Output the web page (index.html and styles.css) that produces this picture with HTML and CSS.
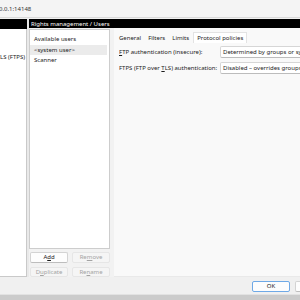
FILE: index.html
```html
<!DOCTYPE html>
<html lang="en">
<head>
    <meta charset="UTF-8">
    <title>Rights management / Users</title>

    <link rel="stylesheet" href="styles.css">
</head>
<body>
<div class="window">
    <div class="titlebar"><span class="address">0.0.1:14148</span></div>

    <div class="main">
        <div class="side">
            <div class="bar"></div>
            <div class="tree">
                <div class="tree-item"><span>Require explicit FTP over TLS (FTPS)</span></div>
            </div>
        </div>

        <div class="content">
            <div class="bar">Rights management / Users</div>

            <div class="content-body">
                <div class="users">
                    <div class="user-list">
                        <div class="list-head">Available users</div>
                        <div class="list-item selected">&lt;system user&gt;</div>
                        <div class="list-item">Scanner</div>
                    </div>

                    <div class="user-buttons">
                        <button class="btn">A<u>d</u>d</button>
                        <button class="btn" disabled>Re<u>m</u>ove</button>
                        <button class="btn" disabled>D<u>u</u>plicate</button>
                        <button class="btn" disabled>Re<u>n</u>ame</button>
                    </div>
                </div>

                <div class="settings">
                    <div class="tabs">
                        <div class="tab">General</div>
                        <div class="tab">Filters</div>
                        <div class="tab">Limits</div>
                        <div class="tab active">Protocol policies</div>
                    </div>

                    <div class="tab-page">
                        <label class="field-label"><u>F</u>TP authentication (insecure):</label>
                        <div class="combo">Determined by groups or system settings</div>

                        <label class="field-label">FTPS (FTP over <u>T</u>LS) authentication:</label>
                        <div class="combo">Disabled &ndash; overrides groups and system</div>
                    </div>
                </div>
            </div>
        </div>
    </div>

    <div class="footer">
        <button class="btn default">OK</button>
        <button class="btn">Cancel</button>
    </div>

    <div class="bottom-edge"></div>
</div>
</body>
</html>
```

FILE: styles.css
```css
body {
    margin: 0;
    overflow: hidden;
    font-family: "Noto Sans", "Open Sans", sans-serif;
    font-size: 6px;
    color: #1b1b1b;
}

.window {
    width: 340px;
    height: 300px;
    display: flex;
    flex-direction: column;
    background-color: #f0f0f0;
}

.titlebar {
    height: 17px;
    display: flex;
    align-items: center;
    background-color: #f4f4f4;
    border-bottom: 1px solid #d9d9d9;
    margin-bottom: 1px;
    color: #333;
}

.address {
    margin-left: -1px;
}

.main {
    height: 258px;
    display: flex;
    gap: 2px;
    background-color: #e9e9e9;
}

.bar {
    height: 10px;
    display: flex;
    align-items: center;
    padding-left: 2px;
    background-color: #000;
    color: #fff;
    white-space: nowrap;
}

/* left navigation tree, scrolled so only the end of the text shows */
.side {
    width: 27px;
    display: flex;
    flex-direction: column;
}

.tree {
    flex: 1;
    background-color: #fff;
    border-right: 1px solid #c9c9c9;
    border-bottom: 1px solid #c9c9c9;
    padding-top: 23px;
    overflow: hidden;
}

.tree-item {
    height: 10px;
    display: flex;
    align-items: center;
    justify-content: flex-end;
    padding-right: 1px;
    white-space: nowrap;
    overflow: hidden;
}

.content {
    flex: 1;
    display: flex;
    flex-direction: column;
}

.content-body {
    flex: 1;
    display: flex;
}

/* users column */
.users {
    width: 85px;
    display: flex;
    flex-direction: column;
    background-color: #f2f2f2;
}

.user-list {
    width: 79px;
    height: 218px;
    margin-top: 1px;
    background-color: #fff;
    border: 1px solid #cdcdcd;
}

.list-head {
    height: 10px;
    display: flex;
    align-items: center;
    padding: 4px 0 1px 4px;
}

.list-item {
    height: 10px;
    display: flex;
    align-items: center;
    padding-left: 4px;
    margin-right: 2px;
}

.list-item.selected {
    background-color: #ebebeb;
}

.user-buttons {
    display: grid;
    grid-template-columns: 38px 38px;
    column-gap: 4px;
    row-gap: 4px;
    margin-top: 3px;
    padding-left: 1px;
}

.btn {
    height: 10.5px;
    padding: 0;
    font-family: inherit;
    font-size: 6px;
    color: #1b1b1b;
    background-color: #fdfdfd;
    border: 1px solid #d3d3d3;
    border-bottom-color: #bdbdbd;
    border-radius: 2px;
}

.btn:disabled {
    color: #a3a3a3;
    background-color: #f5f5f5;
    border-color: #e6e6e6;
}

/* settings with tabs */
.settings {
    flex: 1;
    background-color: #f9f9f9;
    padding: 4px 0 0 2px;
    margin-bottom: 1px;
}

.tabs {
    display: flex;
    height: 11px;
}

.tab {
    display: flex;
    align-items: center;
    padding: 0 3px;
    white-space: nowrap;
}

.tab + .tab {
    margin-left: 1px;
}

.tab.active {
    background-color: #fff;
    border: 1px solid #e3e3e3;
    border-bottom: none;
    padding: 0 3px;
}

.tab-page {
    display: grid;
    grid-template-columns: 101px 115px;
    row-gap: 4px;
    align-items: center;
    padding: 3px 0 0 3px;
    white-space: nowrap;
}

.field-label {
    overflow: hidden;
}

.combo {
    height: 10px;
    display: flex;
    align-items: center;
    padding-left: 2px;
    background-color: #fff;
    border: 1px solid #d6d6d6;
    border-bottom-color: #bcbcbc;
    border-radius: 2px;
    overflow: hidden;
}

/* dialog buttons */
.footer {
    height: 17px;
    display: flex;
    justify-content: flex-end;
    gap: 5px;
    padding: 4px 7px 0 0;
    box-sizing: border-box;
}

.footer .btn {
    width: 38px;
}

.footer .btn.default {
    border-color: #6fa9e6;
}

.bottom-edge {
    flex: 1;
    background-color: #cbcbcb;
    border-top: 1px solid #e2e2e2;
}
```
